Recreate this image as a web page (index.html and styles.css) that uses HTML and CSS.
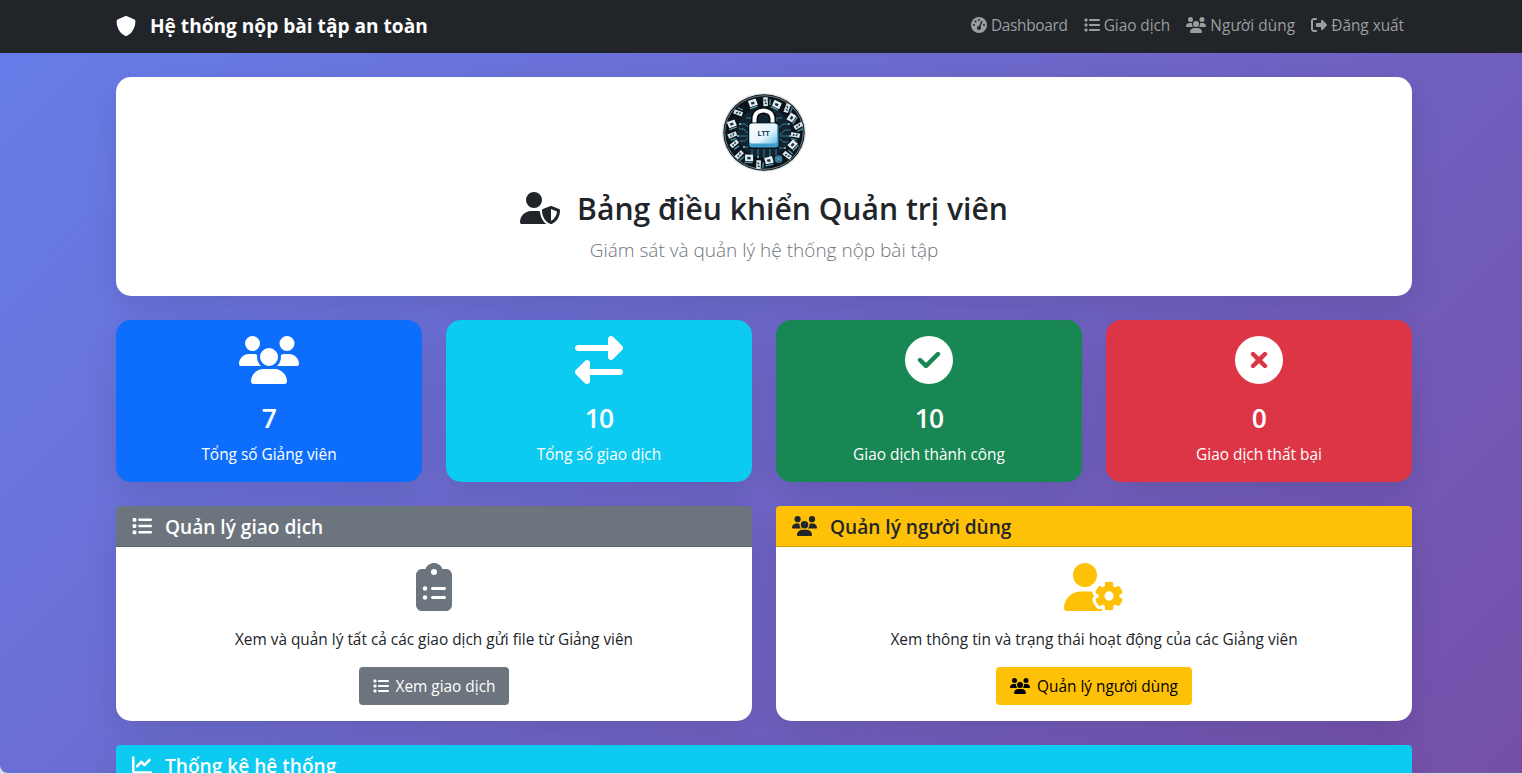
FILE: index.html
```html
<!DOCTYPE html>
<html lang="vi">
<head>
<meta charset="utf-8">
<title>Hệ thống nộp bài tập an toàn</title>
<link rel="stylesheet" href="styles.css">
</head>
<body>
<svg class="sprite" aria-hidden="true">
  <symbol id="users" viewBox="0 0 640 512"><path d="M144 0a80 80 0 1 1 0 160A80 80 0 1 1 144 0zM512 0a80 80 0 1 1 0 160A80 80 0 1 1 512 0zM0 298.7C0 239.8 47.8 192 106.7 192h42.7c15.9 0 31 3.5 44.6 9.7c-1.3 7.2-1.9 14.7-1.9 22.3c0 38.2 16.8 72.5 43.3 96c-.2 0-.4 0-.7 0H21.3C9.6 320 0 310.4 0 298.7zM405.3 320c-.2 0-.4 0-.7 0c26.6-23.5 43.3-57.8 43.3-96c0-7.6-.7-15-1.9-22.3c13.6-6.3 28.7-9.7 44.6-9.7h42.7C592.2 192 640 239.8 640 298.7c0 11.8-9.6 21.3-21.3 21.3H405.3zM224 224a96 96 0 1 1 192 0 96 96 0 1 1 -192 0zM128 485.3C128 411.7 187.7 352 261.3 352H378.7C452.3 352 512 411.7 512 485.3c0 14.7-11.9 26.7-26.7 26.7H154.7c-14.7 0-26.7-11.9-26.7-26.7z"/></symbol>
  <symbol id="list" viewBox="0 0 512 512"><path d="M40 48C26.7 48 16 58.7 16 72v48c0 13.3 10.7 24 24 24H88c13.3 0 24-10.7 24-24V72c0-13.3-10.7-24-24-24H40zM192 64c-17.7 0-32 14.3-32 32s14.3 32 32 32H480c17.7 0 32-14.3 32-32s-14.3-32-32-32H192zm0 160c-17.7 0-32 14.3-32 32s14.3 32 32 32H480c17.7 0 32-14.3 32-32s-14.3-32-32-32H192zm0 160c-17.7 0-32 14.3-32 32s14.3 32 32 32H480c17.7 0 32-14.3 32-32s-14.3-32-32-32H192zM16 232v48c0 13.3 10.7 24 24 24H88c13.3 0 24-10.7 24-24V232c0-13.3-10.7-24-24-24H40c-13.3 0-24 10.7-24 24zM40 368c-13.3 0-24 10.7-24 24v48c0 13.3 10.7 24 24 24H88c13.3 0 24-10.7 24-24V392c0-13.3-10.7-24-24-24H40z"/></symbol>
  <symbol id="signout" viewBox="0 0 512 512"><path d="M377.9 105.9L500.7 228.7c7.2 7.2 11.3 17.1 11.3 27.3s-4.1 20.1-11.3 27.3L377.9 406.1c-6.4 6.4-15 9.9-24 9.9c-18.7 0-33.9-15.2-33.9-33.9l0-62.1-128 0c-17.7 0-32-14.3-32-32l0-64c0-17.7 14.3-32 32-32l128 0 0-62.1c0-18.7 15.2-33.9 33.9-33.9c9 0 17.6 3.6 24 9.9zM160 96L96 96c-17.7 0-32 14.3-32 32l0 256c0 17.7 14.3 32 32 32l64 0c17.7 0 32 14.3 32 32s-14.3 32-32 32l-64 0c-53 0-96-43-96-96L0 128C0 75 43 32 96 32l64 0c17.7 0 32 14.3 32 32s-14.3 32-32 32z"/></symbol>
  <symbol id="shield" viewBox="0 0 512 512"><path d="M256 0c4.6 0 9.2 1 13.4 2.9L457.7 82.8c22 9.3 38.4 31 38.3 57.2c-.5 99.2-41.3 280.7-213.6 363.2c-16.7 8-36.1 8-52.8 0C57.3 420.7 16.5 239.2 16 140c-.1-26.2 16.3-47.9 38.3-57.2L242.7 2.9C246.8 1 251.4 0 256 0z"/></symbol>
  <symbol id="gauge" viewBox="0 0 512 512"><path d="M0 256a256 256 0 1 1 512 0A256 256 0 1 1 0 256zM288 96a32 32 0 1 0 -64 0 32 32 0 1 0 64 0zM256 416c35.3 0 64-28.7 64-64c0-17.4-6.9-33.1-18.1-44.6L366 161.7c5.3-12.1-.2-26.3-12.3-31.6s-26.3 .2-31.6 12.3L257.9 288c-.6 0-1.3 0-1.9 0c-35.3 0-64 28.7-64 64s28.7 64 64 64zM176 144a32 32 0 1 0 -64 0 32 32 0 1 0 64 0zM96 288a32 32 0 1 0 0-64 32 32 0 1 0 0 64zm352-32a32 32 0 1 0 -64 0 32 32 0 1 0 64 0z"/></symbol>
  <symbol id="usershield" viewBox="0 0 640 512"><path d="M224 256A128 128 0 1 0 224 0a128 128 0 1 0 0 256zm-45.7 48C79.8 304 0 383.8 0 482.3C0 498.7 13.3 512 29.7 512H418.3c1.8 0 3.5-.2 5.3-.5c-76.3-55.1-99.8-141-103.1-200.2c-16.1-4.8-33.1-7.3-50.7-7.3H178.3zm308.8-78.3l-120 48C358 277.4 352 286.2 352 296c0 63.3 25.9 168.8 134.8 214.2c5.9 2.5 12.6 2.5 18.5 0C614.1 464.8 640 359.3 640 296c0-9.8-6-18.6-15.1-22.3l-120-48c-5.7-2.3-12.1-2.3-17.8 0zM591.4 312c-3.9 50.7-27.2 116.7-95.4 149.7V273.8L591.4 312z"/></symbol>
  <symbol id="exchange" viewBox="0 0 512 512"><path d="M32 96l320 0V32c0-12.9 7.8-24.6 19.8-29.6s25.7-2.2 34.9 6.9l96 96c6 6 9.4 14.1 9.4 22.6s-3.4 16.6-9.4 22.6l-96 96c-9.2 9.2-22.9 11.9-34.9 6.9s-19.8-16.6-19.8-29.6V160L32 160c-17.7 0-32-14.3-32-32s14.3-32 32-32zM480 352c17.7 0 32 14.3 32 32s-14.3 32-32 32H160v64c0 12.9-7.8 24.6-19.8 29.6s-25.7 2.2-34.9-6.9l-96-96c-6-6-9.4-14.1-9.4-22.6s3.4-16.6 9.4-22.6l96-96c9.2-9.2 22.9-11.9 34.9-6.9s19.8 16.6 19.8 29.6l0 64H480z"/></symbol>
  <symbol id="check" viewBox="0 0 512 512"><path d="M256 512A256 256 0 1 0 256 0a256 256 0 1 0 0 512zM369 209L241 337c-9.4 9.4-24.6 9.4-33.9 0l-64-64c-9.4-9.4-9.4-24.6 0-33.9s24.6-9.4 33.9 0l47 47L335 175c9.4-9.4 24.6-9.4 33.9 0s9.4 24.6 0 33.9z"/></symbol>
  <symbol id="cross" viewBox="0 0 512 512"><path d="M256 512A256 256 0 1 0 256 0a256 256 0 1 0 0 512zM175 175c9.4-9.4 24.6-9.4 33.9 0l47 47 47-47c9.4-9.4 24.6-9.4 33.9 0s9.4 24.6 0 33.9l-47 47 47 47c9.4 9.4 9.4 24.6 0 33.9s-24.6 9.4-33.9 0l-47-47-47 47c-9.4 9.4-24.6 9.4-33.9 0s-9.4-24.6 0-33.9l47-47-47-47c-9.4-9.4-9.4-24.6 0-33.9z"/></symbol>
  <symbol id="clipboard" viewBox="0 0 384 512"><path d="M192 0c-41.8 0-77.4 26.7-90.5 64H64C28.7 64 0 92.7 0 128V448c0 35.3 28.7 64 64 64H320c35.3 0 64-28.7 64-64V128c0-35.3-28.7-64-64-64H282.5C269.4 26.7 233.8 0 192 0zm0 64a32 32 0 1 1 0 64 32 32 0 1 1 0-64zM72 272a24 24 0 1 1 48 0 24 24 0 1 1 -48 0zm104-16H304c8.8 0 16 7.2 16 16s-7.2 16-16 16H176c-8.8 0-16-7.2-16-16s7.2-16 16-16zM72 368a24 24 0 1 1 48 0 24 24 0 1 1 -48 0zm88 0c0-8.8 7.2-16 16-16H304c8.8 0 16 7.2 16 16s-7.2 16-16 16H176c-8.8 0-16-7.2-16-16z"/></symbol>
  <symbol id="usergear" viewBox="0 0 640 512"><path d="M224 0a128 128 0 1 1 0 256A128 128 0 1 1 224 0zM178.3 304h91.4c11.8 0 23.4 1.2 34.5 3.3c-2.1 18.5 7.4 35.6 21.8 44.8c-16.6 10.6-26.7 31.6-20 53.3c4 12.9 9.4 25.5 16.4 37.6s15.2 23.1 24.4 33c15.7 16.9 39.6 18.4 57.2 8.7v.9c0 9.2 2.7 18.5 7.9 26.3H29.7C13.3 512 0 498.7 0 482.3C0 383.8 79.8 304 178.3 304zM436 218.2c0-7 4.5-13.3 11.3-14.8c10.5-2.4 21.5-3.7 32.7-3.7s22.2 1.3 32.7 3.7c6.8 1.5 11.3 7.8 11.3 14.8v30.6c7.9 3.4 15.4 7.7 22.3 12.8l24.9-14.3c6.1-3.5 13.7-2.7 18.5 2.4c7.6 8.1 14.3 17.2 20.1 27.2s10.3 20.4 13.5 31c2.1 6.7-1.1 13.7-7.2 17.2l-25 14.4c.4 4 .7 8.1 .7 12.3s-.2 8.2-.7 12.3l25 14.4c6.1 3.5 9.2 10.5 7.2 17.2c-3.3 10.6-7.8 21-13.5 31s-12.5 19.1-20.1 27.2c-4.8 5.1-12.5 5.9-18.5 2.4l-24.9-14.3c-6.9 5.1-14.3 9.4-22.3 12.8l0 30.6c0 7-4.5 13.3-11.3 14.8c-10.5 2.4-21.5 3.7-32.7 3.7s-22.2-1.3-32.7-3.7c-6.8-1.5-11.3-7.8-11.3-14.8V454.8c-8-3.4-15.6-7.7-22.5-12.9l-24.7 14.3c-6.1 3.5-13.7 2.7-18.5-2.4c-7.6-8.1-14.3-17.2-20.1-27.2s-10.3-20.4-13.5-31c-2.1-6.7 1.1-13.7 7.2-17.2l24.8-14.3c-.4-4.1-.7-8.2-.7-12.4s.2-8.3 .7-12.4L343.8 325c-6.1-3.5-9.2-10.5-7.2-17.2c3.3-10.6 7.7-21 13.5-31s12.5-19.1 20.1-27.2c4.8-5.1 12.4-5.9 18.5-2.4l24.8 14.3c6.9-5.1 14.5-9.4 22.5-12.9V218.2zm92.1 133.5a48.1 48.1 0 1 0 -96.1 0 48.1 48.1 0 1 0 96.1 0z"/></symbol>
  <symbol id="chart" viewBox="0 0 512 512"><path d="M64 64c0-17.7-14.3-32-32-32S0 46.3 0 64V400c0 44.2 35.8 80 80 80H480c17.7 0 32-14.3 32-32s-14.3-32-32-32H80c-8.8 0-16-7.2-16-16V64zm406.6 86.6c12.5-12.5 12.5-32.8 0-45.3s-32.8-12.5-45.3 0L320 210.7l-57.4-57.4c-12.5-12.5-32.8-12.5-45.3 0l-112 112c-12.5 12.5-12.5 32.8 0 45.3s32.8 12.5 45.3 0L240 221.3l57.4 57.4c12.5 12.5 32.8 12.5 45.3 0l128-128z"/></symbol>
</svg>
<div class="page">
  <nav class="navbar">
    <a class="brand"><svg class="icon i20"><use href="#shield"/></svg><span>Hệ thống nộp bài tập an toàn</span></a>
    <div class="links">
      <a class="link l1"><svg class="icon i16"><use href="#gauge"/></svg><span>Dashboard</span></a>
      <a class="link l2"><svg class="icon i16"><use href="#list"/></svg><span>Giao dịch</span></a>
      <a class="link l3"><svg class="icon i16 wide"><use href="#users"/></svg><span>Người dùng</span></a>
      <a class="link l4"><svg class="icon i16"><use href="#signout"/></svg><span>Đăng xuất</span></a>
    </div>
  </nav>
  <main class="content">
    <section class="card hero">
      <svg class="logo" viewBox="0 0 84 80">
        <defs>
          <linearGradient id="lock" x1="0" y1="0" x2="1" y2="1"><stop offset="0" stop-color="#fff"/><stop offset=".6" stop-color="#e3f3fa"/><stop offset="1" stop-color="#6cc0e4"/></linearGradient>
          <g id="chip"><path d="M-4.500 -3.500l8-.8 1 6.500-8 .8z" fill="#e4eff3"/><path d="M-2 -1.500l3.500-.3v2.500l-3 .2z" fill="#1c3440"/><path d="M-4 4.500l8-1" stroke="#5b9cb5" stroke-width="1.400"/></g>
          <g id="tag"><path d="M-3 -4.500l4.500-.5 1.500 8.500-4.500 1z" fill="#d3e3ea"/><path d="M-1.500 -2l2 1M-.5 1l2 .5" stroke="#15242d" stroke-width="1.200"/><path d="M4.200 -3.500l.6 6" stroke="#4590ad" stroke-width="1.400"/></g>
        </defs>
        <ellipse cx="42" cy="39.500" rx="42" ry="39.500" fill="#dde2e4"/>
        <ellipse cx="42" cy="39.500" rx="40.700" ry="38.200" fill="#0b1218"/>
        <ellipse cx="42" cy="39.500" rx="39.300" ry="36.800" fill="none" stroke="#8798a0" stroke-width=".8"/>
        <ellipse cx="42" cy="39.500" rx="27" ry="25.500" fill="#12242f"/>
        <g fill="none" stroke="#3c7b96" stroke-width="1">
          <path d="M17 31h6l4 4v4M17 36h5l3 4h5M15 43h12M18 48h5l3-3h5M21 54h5l5-5v-3M30 63v-8l4-4M36 65v-9M42 65V55M48 65v-9M54 62v-7l-4-4M67 31h-6l-4 4M69 37h-6l-4 4h-5M69 43H57M66 49h-5l-4-4M63 55h-5l-4-5M24 25h5l4 5M60 25h-5l-4 5M32 18v6l-3 4M52 18v6l3 4"/>
        </g>
        <g fill="#78b9d2"><circle cx="18" cy="31" r="1"/><circle cx="67" cy="31" r="1"/><circle cx="16" cy="43" r="1"/><circle cx="68" cy="43" r="1"/><circle cx="36" cy="64" r="1"/><circle cx="48" cy="64" r="1"/><circle cx="63" cy="55" r="1"/><circle cx="22" cy="54" r="1"/></g>
        <use href="#chip" transform="translate(31 10.500) rotate(-12)"/>
        <use href="#tag" transform="translate(43.500 9) rotate(8)"/>
        <use href="#chip" transform="translate(54.500 12) rotate(32)"/>
        <use href="#tag" transform="translate(65 15.500) rotate(30)"/>
        <use href="#chip" transform="translate(70 25) rotate(-50)"/>
        <use href="#tag" transform="translate(76 33) rotate(70)"/>
        <use href="#tag" transform="translate(73 42) rotate(110)"/>
        <use href="#chip" transform="translate(71 52) rotate(-40)"/>
        <use href="#tag" transform="translate(65.500 62.500) rotate(-42)"/>
        <circle cx="56.500" cy="66" r="4" fill="#2f6f8c"/><path d="M53.500 64.500l6 3M54.500 68.500l4-5" stroke="#5fa9c4" stroke-width=".8"/>
        <use href="#chip" transform="translate(47 68) rotate(-6)"/>
        <use href="#tag" transform="translate(36.500 72) rotate(12)"/>
        <use href="#chip" transform="translate(27 65.500) rotate(8)"/>
        <use href="#tag" transform="translate(17 62) rotate(55)"/>
        <use href="#tag" transform="translate(12 51) rotate(60)"/>
        <use href="#tag" transform="translate(10 42) rotate(78)"/>
        <use href="#chip" transform="translate(10 31.500) rotate(-14)"/>
        <use href="#tag" transform="translate(16.500 20) rotate(-60)"/>
        <path d="M32.500 32v-6c0-11.500 18-11.500 18 0v6" fill="none" stroke="#05090c" stroke-width="7"/>
        <path d="M32.500 32v-6c0-11.500 18-11.500 18 0v6" fill="none" stroke="#fff" stroke-width="4"/>
        <rect x="26" y="29.500" width="31.500" height="26.500" rx="4" fill="#081118"/>
        <rect x="27" y="30.500" width="29.500" height="24" rx="3" fill="#3d9fc9"/>
        <rect x="27.500" y="30.500" width="27.500" height="20" rx="2.500" fill="url(#lock)"/>
        <text x="41.500" y="42.500" class="logo-text">LTT</text>
      </svg>
      <h1 class="hero-title"><svg class="icon"><use href="#usershield"/></svg><span>Bảng điều khiển Quản trị viên</span></h1>
      <p class="lead">Giám sát và quản lý hệ thống nộp bài tập</p>
    </section>
    <section class="stats">
      <div class="card stat blue"><svg class="icon wide"><use href="#users"/></svg><h3>7</h3><p>Tổng số Giảng viên</p></div>
      <div class="card stat cyan"><svg class="icon"><use href="#exchange"/></svg><h3>10</h3><p>Tổng số giao dịch</p></div>
      <div class="card stat green"><svg class="icon"><use href="#check"/></svg><h3>10</h3><p>Giao dịch thành công</p></div>
      <div class="card stat red"><svg class="icon"><use href="#cross"/></svg><h3>0</h3><p>Giao dịch thất bại</p></div>
    </section>
    <section class="panels">
      <div class="card panel">
        <h5 class="head gray"><svg class="icon i20"><use href="#list"/></svg><span>Quản lý giao dịch</span></h5>
        <div class="body">
          <svg class="icon big clip"><use href="#clipboard"/></svg>
          <p>Xem và quản lý tất cả các giao dịch gửi file từ Giảng viên</p>
          <a class="btn gray b-a"><svg class="icon i16"><use href="#list"/></svg><span>Xem giao dịch</span></a>
        </div>
      </div>
      <div class="card panel">
        <h5 class="head yellow"><svg class="icon i20 wide"><use href="#users"/></svg><span>Quản lý người dùng</span></h5>
        <div class="body">
          <svg class="icon big gear"><use href="#usergear"/></svg>
          <p>Xem thông tin và trạng thái hoạt động của các Giảng viên</p>
          <a class="btn yellow b-b"><svg class="icon i16 wide"><use href="#users"/></svg><span>Quản lý người dùng</span></a>
        </div>
      </div>
    </section>
    <section class="card panel">
      <h5 class="head cyan"><svg class="icon i20"><use href="#chart"/></svg><span>Thống kê hệ thống</span></h5>
      <div class="body"></div>
    </section>
  </main>
</div>
</body>
</html>
```
FILE: styles.css
```css
* { box-sizing: border-box; }
body { margin: 0; height: 774px; overflow: hidden; background: #dcdde0; color: #212529; font: 15.4px/24px "Open Sans", "Noto Sans", sans-serif; }
h1, h3, h5, p { margin: 0; }
.sprite { display: none; }
.icon { display: block; flex: none; fill: currentColor; }
.page { height: 773px; overflow: hidden; border-radius: 0 0 0 8px; background: linear-gradient(135deg, #667eea 0%, #764ba2 100%) 0 0 / 100% 1000px; }
.i16 { width: 16px; height: 16px; }
.i16.wide { width: 20px; }
.i20 { width: 20px; height: 20px; }
.i20.wide { width: 25px; }

.navbar { display: flex; justify-content: space-between; height: 53px; padding: 0 118px 0 116px; background: #212529; white-space: nowrap; }
.brand { display: flex; align-items: center; height: 51px; gap: 14px; color: #fff; font-size: 19.1px; font-weight: 700; }
.links { display: flex; align-items: center; height: 50px; gap: 16px; color: #9b9d9e; }
.link { display: flex; align-items: center; gap: 4px; }
.link span, .btn span { padding-top: 2px; }
.l1 { letter-spacing: -.3px; }
.l2 { letter-spacing: -.05px; }
.l3 { letter-spacing: .1px; }
.l4 { letter-spacing: -.04px; }

.content { display: flex; flex-direction: column; gap: 24px; width: 1296px; margin: 24px 0 0 116px; }
.card { border-radius: 15px; background: #fff; box-shadow: 0 10px 30px rgba(0, 0, 0, .1); }
.hero { display: flex; flex-direction: column; align-items: center; height: 219px; padding-top: 16px; }
.logo { width: 84px; height: 80px; }
.logo-text { font: 700 7px "Open Sans", sans-serif; fill: #173f58; text-anchor: middle; }
.hero-title { display: flex; align-items: center; gap: 17px; height: 38px; margin-top: 17px; font-size: 30.1px; font-weight: 600; line-height: 38px; white-space: nowrap; }
.hero-title .icon { width: 40px; height: 32px; margin-top: -2px; }
.lead { height: 30px; margin-top: 7px; color: #6c757d; font-size: 19px; font-weight: 300; line-height: 30px; white-space: nowrap; }

.stats { display: grid; grid-template-columns: repeat(4, 1fr); gap: 24px; }
.stat { display: flex; flex-direction: column; align-items: center; height: 162px; padding-top: 16px; color: #fff; white-space: nowrap; }
.stat .icon { width: 48px; height: 48px; }
.stat .icon.wide { width: 60px; }
.stat h3 { height: 34px; margin: 17px 0 8px; font-size: 26.4px; font-weight: 600; line-height: 34px; letter-spacing: -.8px; }
.blue { background: #0d6efd; }
.cyan { background: #0dcaf0; color: #fff; }
.green { background: #198754; }
.red { background: #dc3545; }
.gray { background: #6c757d; color: #fff; }
.yellow { background: #ffc107; }

.panels { display: grid; grid-template-columns: 1fr 1fr; gap: 24px; }
.panel { height: 215px; }
.head { display: flex; align-items: center; gap: 13px; height: 41px; padding: 0 16px; border-bottom: 1px solid rgba(0, 0, 0, .176); border-radius: 4px 4px 0 0; font-size: 19.1px; font-weight: 600; white-space: nowrap; }
.head span { padding-top: 2px; }
.body { display: flex; flex-direction: column; align-items: center; padding-top: 16px; white-space: nowrap; }
.big { height: 48px; }
.clip { width: 36px; color: #6c757d; }
.gear { width: 60px; color: #ffc107; }
.body p { margin: 17px 0 15px; }
.btn { display: flex; align-items: center; justify-content: center; gap: 7px; height: 38px; border-radius: 4px; }
.b-a { width: 150px; }
.b-b { width: 196px; color: #000; }
```
